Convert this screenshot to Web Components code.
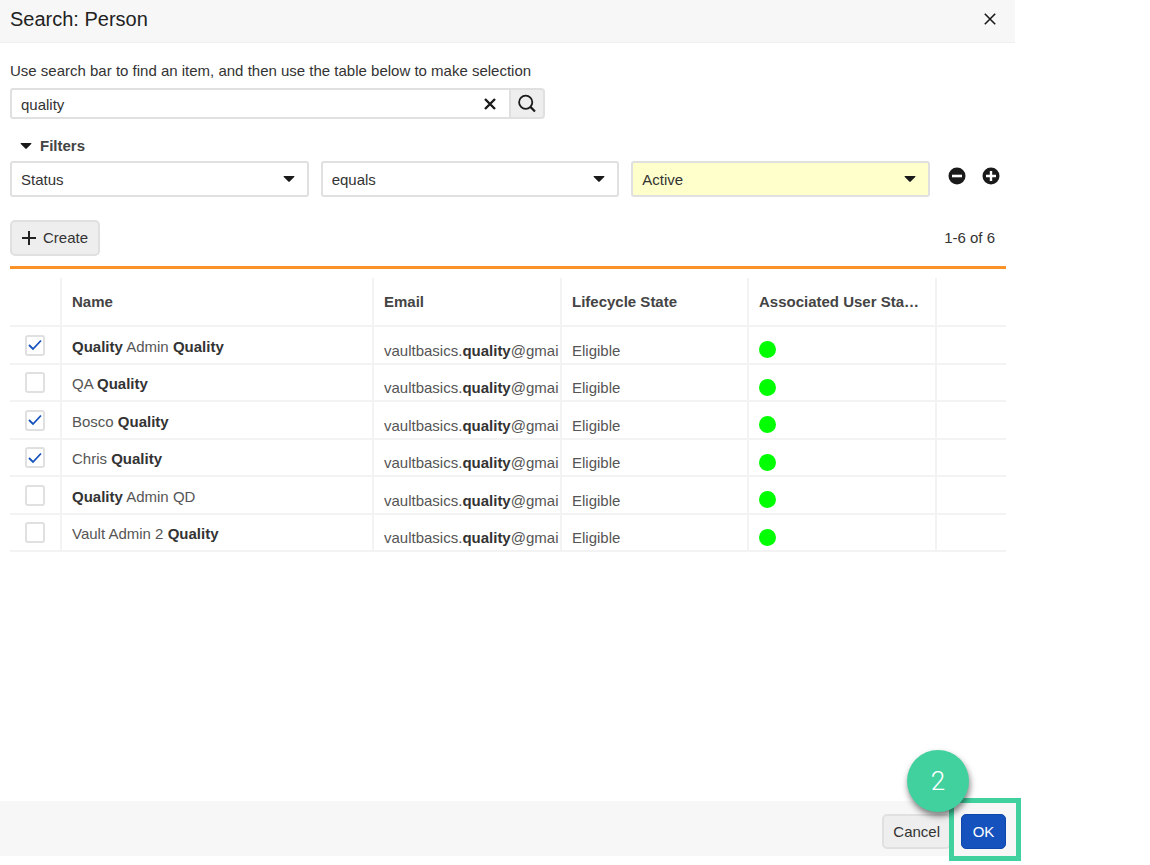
<!DOCTYPE html>
<html lang="en">
<head>
<meta charset="utf-8">
<meta name="viewport" content="width=device-width, initial-scale=1">
<title>Search: Person</title>
<style>
  html, body { margin: 0; background: #fff; }
  body { min-height: 100vh; font: 15px/20px "Liberation Sans", Arial, sans-serif; color: #333; }
</style>
</head>
<body>
<person-dialog heading="Search: Person">
  <search-field value="quality">Use search bar to find an item, and then use the table below to make selection</search-field>
  <filter-panel></filter-panel>
  <result-toolbar>1-6 of 6</result-toolbar>
  <result-table></result-table>
  <dialog-actions slot="footer"></dialog-actions>
</person-dialog>

<script>
const base = `
  *, *::before, *::after { box-sizing: border-box; }
  button, input, select { font: inherit; color: inherit; margin: 0; }
  button { cursor: pointer; }
  svg { display: block; }
  .plain { border: 0; padding: 0; background: none; color: #1a1a1a; }
`;

class BaseElement extends HTMLElement {
  render(css, html) {
    this.attachShadow({ mode: 'open' }).innerHTML = `<style>${base}${css}</style>${html}`;
  }
}

customElements.define('person-dialog', class extends BaseElement {
  connectedCallback() {
    this.render(`
      :host { display: flex; flex-direction: column; min-height: calc(100vh - 9px); margin-right: 135px; }
      header { display: flex; align-items: center; justify-content: space-between; height: 43px;
        padding: 0 18px 4px 10px; background: #f7f7f7; border-bottom: 1px solid #f0f0f0; }
      h1 { margin: 0; font-size: 20px; line-height: 24px; font-weight: 400; color: #222; }
      main { flex: 1; padding: 18px 9px 0 10px; }
      footer { height: 55px; background: #f7f7f7; }
    `, `
      <header><h1>${this.getAttribute('heading')}</h1>
        <button class="plain" aria-label="Close"><svg width="14" height="14" viewBox="0 0 14 14"><path d="M1.8 1.8l10.4 10.4M12.2 1.8L1.8 12.2" stroke="currentColor" stroke-width="1.6"/></svg></button>
      </header>
      <main><slot></slot></main>
      <footer><slot name="footer"></slot></footer>
    `);
  }
});

customElements.define('search-field', class extends BaseElement {
  connectedCallback() {
    this.render(`
      :host { display: block; }
      label { display: block; margin-bottom: 7px; }
      .bar { display: grid; grid-template-columns: 499px 36px; height: 31px; }
      .box { display: flex; align-items: center; padding-right: 12px; border: 2px solid #e0e0e0; border-right: 0; border-radius: 3px 0 0 3px; }
      input { flex: 1; min-width: 0; height: 27px; padding: 1px 9px 0; border: 0; outline: 0; background: none; appearance: none; }
      .go { display: grid; place-items: center; border: 2px solid #e0e0e0; border-radius: 0 4px 4px 0; background: #eee; padding: 0; color: #1a1a1a; }
    `, `
      <label for="q"><slot></slot></label>
      <div class="bar">
        <div class="box"><input id="q" type="text" value="${this.getAttribute('value')}">
          <button class="plain" aria-label="Clear"><svg width="14" height="14" viewBox="0 0 14 14"><path d="M2 2l10 10M12 2L2 12" stroke="currentColor" stroke-width="2.4"/></svg></button>
        </div>
        <button class="go" aria-label="Search"><svg width="20" height="20" viewBox="0 0 20 20" fill="none" stroke="currentColor"><circle cx="8.7" cy="8.2" r="6.6" stroke-width="1.8"/><path d="M13.4 12.9L18 17.5" stroke-width="2.2"/></svg></button>
      </div>
    `);
  }
});

const caret = '<svg width="12" height="6" viewBox="0 0 12 6"><path d="M1.2 0h9.6q1.2 0 .4 .9L6.7 5.6q-.7 .7-1.4 0L.8 .9Q0 0 1.2 0z" fill="#1a1a1a"/></svg>';

customElements.define('select-box', class extends BaseElement {
  connectedCallback() {
    this.render(`
      :host { display: grid; align-items: center; height: 36px; border: 2px solid #e0e0e0; border-radius: 3px; background: #fff; }
      :host([highlight]) { background: #ffffcc; }
      select, svg { grid-area: 1 / 1; }
      select { width: 100%; height: 32px; padding: 1px 32px 0 9px; border: 0; outline: 0; background: none; appearance: none; }
      svg { justify-self: end; margin-right: 12px; pointer-events: none; }
    `, `<select aria-label="${this.getAttribute('label')}"><option>${this.getAttribute('value')}</option></select>${caret}`);
  }
});

customElements.define('filter-panel', class extends BaseElement {
  connectedCallback() {
    this.render(`
      :host { display: block; margin-top: 17px; }
      .toggle { display: flex; align-items: center; gap: 8px; margin-left: 10px; height: 20px; font-weight: 700; color: #444; }
      .row { display: grid; grid-template-columns: repeat(3, 1fr) auto; gap: 12px; margin-top: 5px; }
      .tools { display: flex; gap: 16px; padding: 6px 6px 0; align-items: flex-start; }
    `, `
      <button class="plain toggle" aria-expanded="true">${caret}Filters</button>
      <div class="row">
        <select-box label="Field" value="Status"></select-box>
        <select-box label="Operator" value="equals"></select-box>
        <select-box label="Value" value="Active" highlight></select-box>
        <div class="tools">
          <button class="plain" aria-label="Remove filter"><svg width="18" height="18" viewBox="0 0 18 18"><circle cx="9" cy="9" r="8.5" fill="#1a1a1a"/><path d="M4 9h10" stroke="#fff" stroke-width="2.6"/></svg></button>
          <button class="plain" aria-label="Add filter"><svg width="18" height="18" viewBox="0 0 18 18"><circle cx="9" cy="9" r="8.5" fill="#1a1a1a"/><path d="M4 9h10M9 4v10" stroke="#fff" stroke-width="2.4"/></svg></button>
        </div>
      </div>
    `);
  }
});

customElements.define('result-toolbar', class extends BaseElement {
  connectedCallback() {
    this.render(`
      :host { display: flex; align-items: center; justify-content: space-between; margin-top: 23px; padding: 0 11px 10px 0; border-bottom: 3px solid #fa9228; }
      button { display: flex; align-items: center; gap: 7px; height: 36px; padding: 0 10px; border: 2px solid #e0e0e0; border-radius: 5px; background: #eee; color: #333; }
    `, `
      <button><svg width="14" height="14" viewBox="0 0 14 14"><path d="M0 7h14M7 0v14" stroke="#222" stroke-width="2"/></svg>Create</button>
      <slot></slot>
    `);
  }
});

const people = [
  ['<b>Quality</b> Admin <b>Quality</b>', true],
  ['QA <b>Quality</b>', false],
  ['Bosco <b>Quality</b>', true],
  ['Chris <b>Quality</b>', true],
  ['<b>Quality</b> Admin QD', false],
  ['Vault Admin 2 <b>Quality</b>', false],
];

customElements.define('check-box', class extends BaseElement {
  connectedCallback() {
    this.render(`
      :host { display: grid; width: 20px; height: 21px; }
      input, svg { grid-area: 1 / 1; }
      input { width: 20px; height: 21px; appearance: none; border: 2px solid #e0e0e0; border-radius: 3px; background: #fff; }
      svg { place-self: center; pointer-events: none; visibility: hidden; }
      input:checked + svg { visibility: visible; }
    `, `<input type="checkbox" aria-label="${this.getAttribute('label')}" ${this.hasAttribute('checked') ? 'checked' : ''}>
      <svg width="14" height="12" viewBox="0 0 14 12"><path d="M1 6l4 4L13 1.5" fill="none" stroke="#1552bd" stroke-width="1.8"/></svg>`);
  }
});

customElements.define('result-table', class extends BaseElement {
  connectedCallback() {
    const rows = people.map(([name, on]) => `
      <tr><td class="pick"><check-box label="Select ${name.replace(/<[^>]*>/g, '')}" ${on ? 'checked' : ''}></check-box></td>
      <td class="name">${name}</td><td class="low">vaultbasics.<b>quality</b>@gmai</td>
      <td class="low">Eligible</td><td class="low"><span class="dot" role="img" aria-label="Active"></span></td><td></td></tr>`).join('');
    this.render(`
      :host { display: block; margin-top: 9px; }
      table { width: 100%; table-layout: fixed; border-collapse: separate; border-spacing: 0; }
      th, td { padding: 0 0 0 10px; text-align: left; vertical-align: middle; overflow: hidden; white-space: nowrap;
        border-right: 2px solid #f3f3f3; border-bottom: 2px solid #f3f3f3; }
      th:last-child, td:last-child { border-right: 0; }
      th { height: 49px; padding-top: 1px; color: #444; }
      td { height: 38px; color: #555; }
      tbody tr:nth-child(even) td { height: 37px; }
      b { color: #333; }
      td.pick { padding-left: 15px; }
      td.name { padding-top: 3px; }
      td.low { padding-top: 11px; }
      .dot { display: block; width: 17px; height: 17px; margin-bottom: 2px; border-radius: 50%; background: #00ff00; }
    `, `
      <table>
        <colgroup><col style="width:52px"><col style="width:312px"><col style="width:188px"><col style="width:187px"><col style="width:188px"><col></colgroup>
        <thead><tr><th></th><th>Name</th><th>Email</th><th>Lifecycle State</th><th>Associated User Sta…</th><th></th></tr></thead>
        <tbody>${rows}</tbody>
      </table>
    `);
  }
});

customElements.define('step-marker', class extends BaseElement {
  connectedCallback() {
    this.render(`
      :host { position: relative; display: block; padding: 11px 10px 7px 7px; border: 5px solid #41d19f; background: #f7f7f7; }
      .num { position: absolute; right: 47px; bottom: 44px; display: grid; place-items: center; width: 62px; height: 62px; border-radius: 50%;
        background: #41d19f; color: #fff; font: 300 26px/30px Roboto, sans-serif; box-shadow: 1px 4px 6px rgba(0,0,0,.5); }
    `, `<slot></slot><span class="num">${this.getAttribute('step')}</span>`);
  }
});

customElements.define('dialog-actions', class extends BaseElement {
  connectedCallback() {
    this.render(`
      :host { display: flex; justify-content: flex-end; align-items: flex-start; margin-right: -6px; }
      button { display: block; height: 35px; padding: 0 9px; border: 2px solid #e0e0e0; border-radius: 5px; background: #eee; }
      .cancel { margin: 13px -2px 0 0; }
      .ok { width: 45px; padding: 0; border: 1px solid #0d47ad; background: #1552bd; color: #fff; }
      step-marker { margin-top: -3px; }
    `, `<button class="cancel">Cancel</button><step-marker step="2"><button class="ok">OK</button></step-marker>`);
  }
});
</script>
</body>
</html>
